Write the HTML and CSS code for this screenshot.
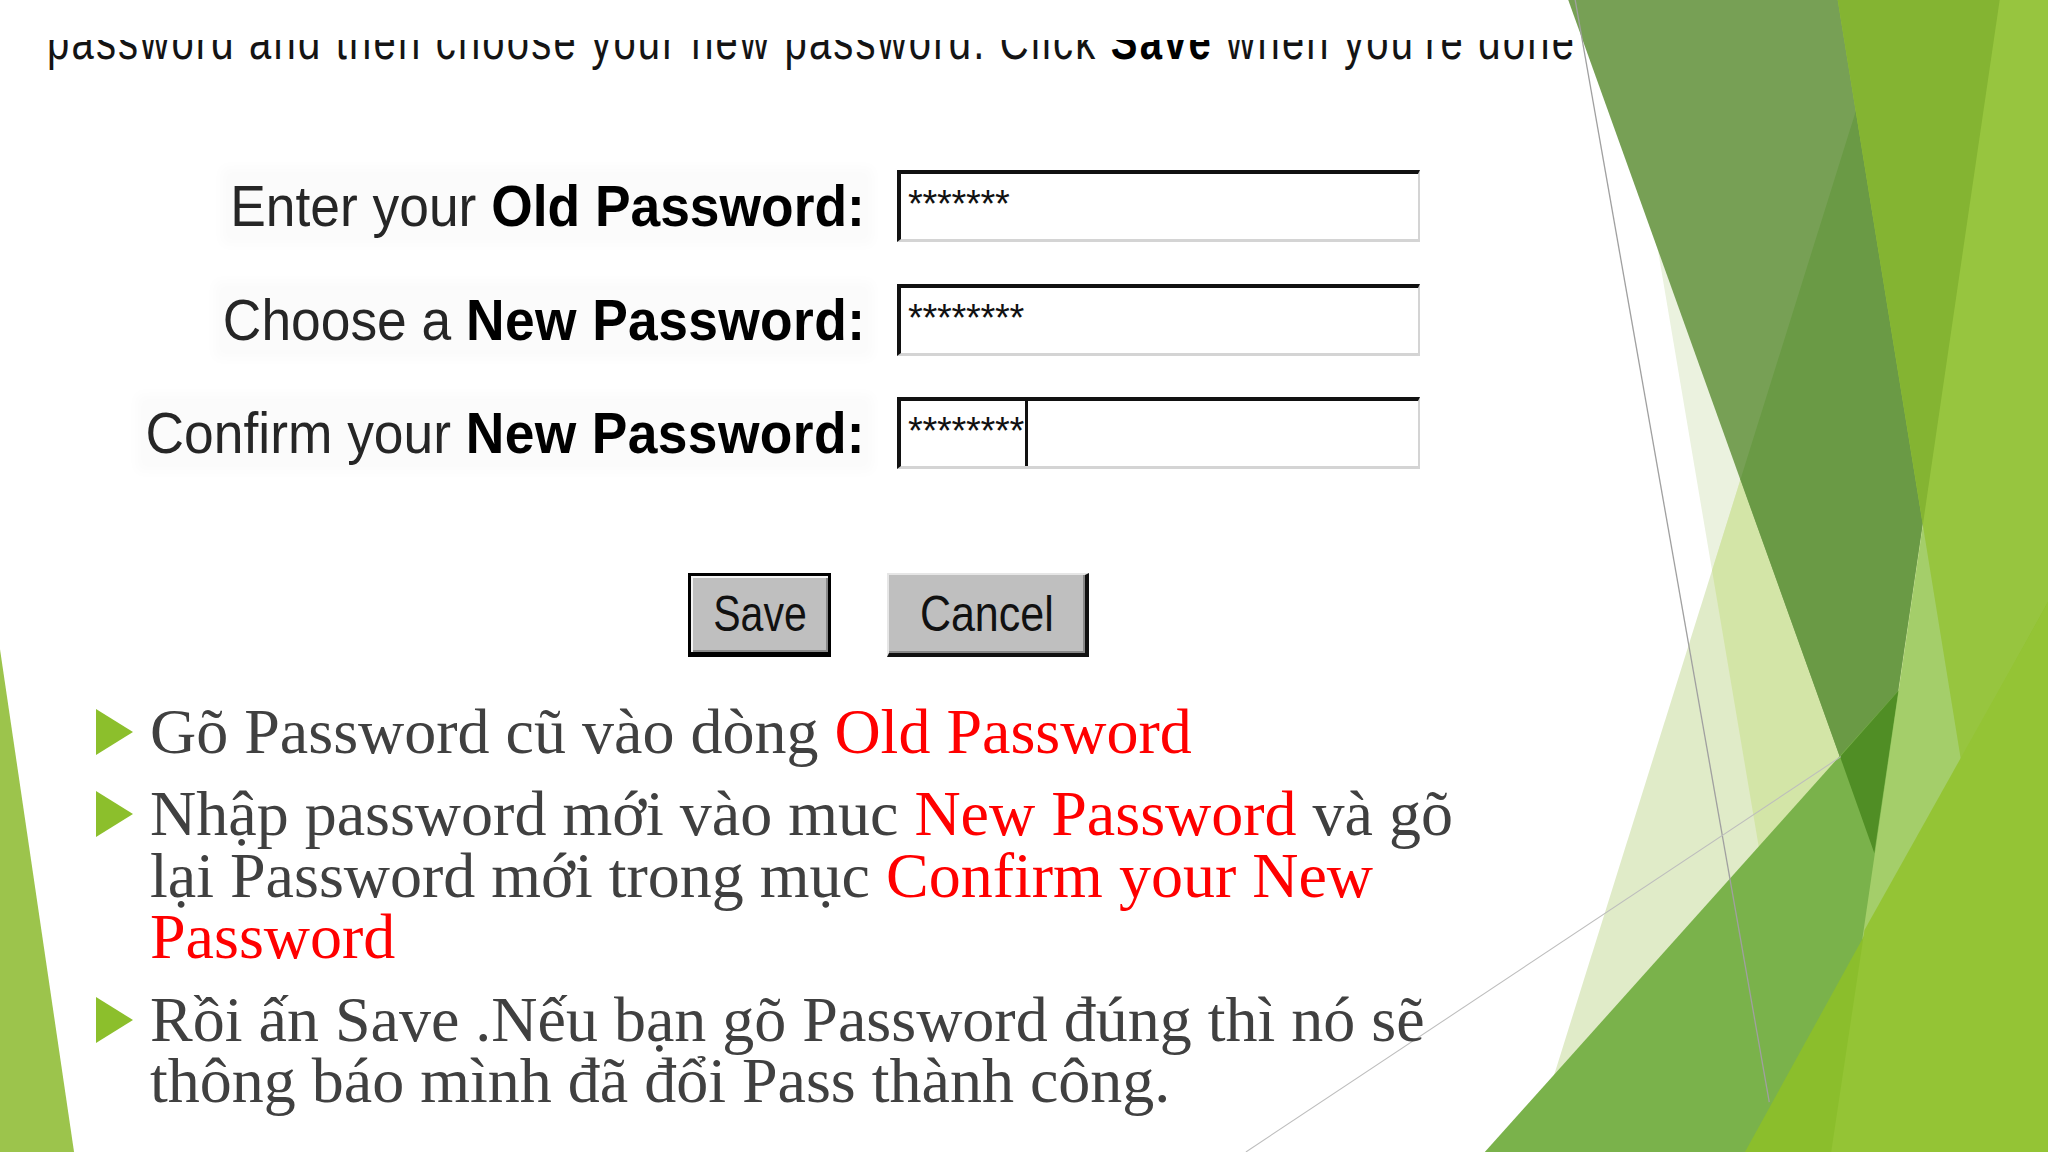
FILE: index.html
```html
<!DOCTYPE html>
<html lang="vi">
<head>
<meta charset="utf-8">
<title>Đổi Password</title>
<link rel="stylesheet" href="styles.css">
</head>
<body>
<div class="slide">
  <svg class="deco" viewBox="0 0 1568 882" preserveAspectRatio="none" aria-hidden="true">
    <polygon points="0,497 56.7,882 0,882" fill="#9cc44c"/>
    <polygon points="1237,0 1568,0 1568,882 1386,882" fill="#ebf2df"/>
    <polygon points="1447.5,0 1568,0 1568,882 1171.4,882" fill="#e0ebc8"/>
    <polygon points="1447.5,0 1568,0 1568,882 1386,882 1310.8,436.7" fill="#d3e5a7"/>
    <polygon points="1200.7,0 1531,0 1435,653" fill="#77a055"/>
    <polygon points="1447.5,0 1531,0 1435,653 1332.6,367" fill="#6a9a45"/>
    <polygon points="1136.8,882 1568,401 1568,882" fill="#7ab24b"/>
    <polygon points="1408.8,579.3 1453.4,529 1435,653" fill="#508e25"/>
    <polygon points="1531,0 1568,0 1568,882 1402,882" fill="#a4ce6a"/>
    <polygon points="1407,0 1568,0 1568,882 1550,882" fill="#97c53f"/>
    <polygon points="1407,0 1531,0 1472.2,401.6" fill="#84b432"/>
    <polygon points="1336,882 1568,461 1568,882" fill="#8bbe2c"/>
    <polygon points="1427.5,712 1568,461 1568,882 1402,882" fill="#94c435"/>
    <line x1="1206" y1="0" x2="1354.6" y2="843.9" stroke="#a0a0a0" stroke-width="1"/>
    <line x1="953.9" y1="882" x2="1409.4" y2="579.3" stroke="#bdbdbd" stroke-width="0.8"/>
  </svg>

  <div class="shot">
    <div class="intro">
      <div class="intro-text">password and then choose your new password. Click <b>Save</b> when you're done</div>
    </div>

    <div class="form">
      <div class="label"><span>Enter your <b>Old Password:</b></span></div>
      <div class="field"><span class="stars">*******</span></div>

      <div class="label"><span>Choose a <b class="wide">New Password:</b></span></div>
      <div class="field"><span class="stars">********</span></div>

      <div class="label"><span>Confirm your <b class="wide">New Password:</b></span></div>
      <div class="field"><span class="stars">********</span><span class="caret"></span></div>
    </div>

    <div class="buttons">
      <div class="btn btn-save"><span>Save</span></div>
      <div class="btn btn-cancel"><span>Cancel</span></div>
    </div>
  </div>

  <ul class="bullets">
    <li>
      <svg class="tri" viewBox="0 0 37 46" aria-hidden="true"><polygon points="0,0 37,23 0,46" fill="#8cbf2c"/></svg>
      <p>Gõ Password cũ vào dòng <span class="red">Old Password</span></p>
    </li>
    <li>
      <svg class="tri" viewBox="0 0 37 46" aria-hidden="true"><polygon points="0,0 37,23 0,46" fill="#8cbf2c"/></svg>
      <p>Nhập password mới vào muc <span class="red">New Password</span> và gõ lại Password mới trong mục <span class="red">Confirm your New Password</span></p>
    </li>
    <li>
      <svg class="tri" viewBox="0 0 37 46" aria-hidden="true"><polygon points="0,0 37,23 0,46" fill="#8cbf2c"/></svg>
      <p>Rồi ấn Save .Nếu bạn gõ Password đúng thì nó sẽ thông báo mình đã đổi Pass thành công.</p>
    </li>
  </ul>
</div>
</body>
</html>
```

FILE: styles.css
```css
* {
  box-sizing: border-box;
}

html,
body {
  margin: 0;
  padding: 0;
  background: #ffffff;
}

.slide {
  position: relative;
  width: 2048px;
  height: 1152px;
  overflow: hidden;
  background: #ffffff;
  font-family: "Liberation Sans", Arial, sans-serif;
}

.deco {
  position: absolute;
  left: 0;
  top: 0;
  width: 2048px;
  height: 1152px;
  z-index: 0;
}

.shot,
.bullets {
  position: relative;
  z-index: 1;
}

/* top line of the screenshot, cut off at its top */
.intro {
  margin: 40px 0 0 47px;
  height: 30px;
  overflow: hidden;
  white-space: nowrap;
}

.intro-text {
  margin-top: -15px;
  font-size: 40px;
  line-height: 40px;
  letter-spacing: 2.2px;
  color: #141414;
  transform: scaleY(1.3);
  transform-origin: 0 34px;
}

.intro-text b {
  color: #000;
}

/* form */
.form {
  display: grid;
  grid-template-columns: 865px 523px;
  column-gap: 32px;
  row-gap: 41.5px;
  margin-top: 100px;
}

.label {
  display: flex;
  justify-content: flex-end;
  align-items: center;
}

.label span {
  display: inline-block;
  font-size: 58px;
  line-height: 1;
  color: #262626;
  white-space: nowrap;
  transform: scaleX(0.92);
  transform-origin: right center;
  background: #fbfbfb;
  box-shadow: 0 0 12px 10px #fbfbfb;
}

.label b {
  color: #000;
}

.label b.wide {
  letter-spacing: 0.4px;
}

.field {
  height: 72px;
  display: flex;
  align-items: flex-start;
  padding-left: 7px;
  background: #fff;
  border-top: 4px solid #111;
  border-left: 4px solid #111;
  border-right: 2px solid #d4d4d4;
  border-bottom: 3px solid #d4d4d4;
}

.stars {
  margin-top: 11px;
  font-size: 38px;
  line-height: 38px;
  letter-spacing: -0.3px;
  color: #111;
}

.caret {
  align-self: stretch;
  width: 3px;
  margin-left: 1px;
  background: #111;
}

/* buttons */
.buttons {
  display: flex;
  gap: 56px;
  margin: 104px 0 0 688px;
}

.btn {
  height: 84px;
  display: flex;
  align-items: center;
  justify-content: center;
  background: #bfbfbf;
  font-size: 50px;
  color: #111;
}

.btn span {
  display: inline-block;
  transform: scaleX(0.82);
}

.btn-save {
  width: 143px;
  border: 3px solid #000;
  border-bottom-width: 5px;
  box-shadow: inset 2px 2px 0 #f4f4f4, inset -2px -2px 0 #888;
}

.btn-cancel {
  width: 202px;
  border-top: 2px solid #e6e6e6;
  border-left: 2px solid #e6e6e6;
  border-right: 4px solid #111;
  border-bottom: 4px solid #111;
  box-shadow: inset -2px -2px 0 #888;
}

.btn-cancel span {
  transform: scaleX(0.86);
}

/* bullets */
.bullets {
  list-style: none;
  margin: 44px 0 0;
  padding: 0 0 0 96px;
  font-family: "Liberation Serif", "Times New Roman", serif;
  font-size: 64px;
  line-height: 61.4px;
  color: #404040;
}

.bullets li {
  display: flex;
  align-items: flex-start;
  gap: 17px;
}

.bullets li + li {
  margin-top: 21px;
}

.tri {
  width: 37px;
  height: 46px;
  margin-top: 8px;
  flex-shrink: 0;
}

.bullets p {
  margin: 0;
  width: 1360px;
}

.red {
  color: #ff0000;
}
```
